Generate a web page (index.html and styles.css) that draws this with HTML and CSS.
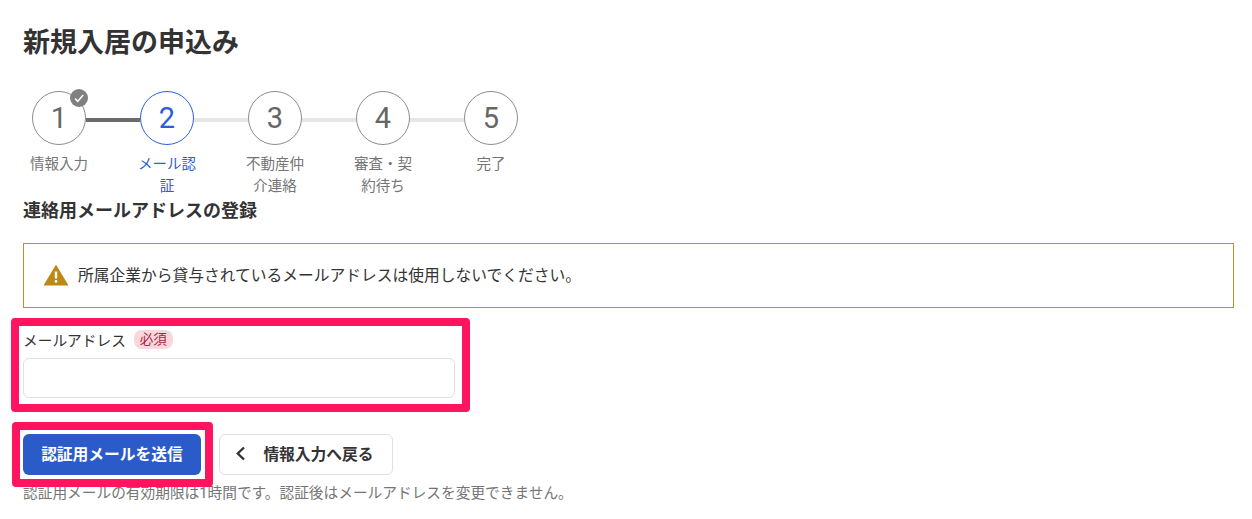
FILE: index.html
```html
<!DOCTYPE html>
<html lang="ja">
<head>
<meta charset="utf-8">
<title>新規入居の申込み</title>
<link rel="stylesheet" href="styles.css">
</head>
<body>
<main class="page">
  <h1 class="title">新規入居の申込み</h1>
  <ol class="steps">
    <li class="step done">
      <div class="circle">1
        <span class="check"><svg viewBox="0 0 18 18" width="18" height="18"><path d="M5 9.5l2.8 2.8L13.2 6" fill="none" stroke="#fff" stroke-width="1.5"/></svg></span>
      </div>
      <div class="label">情報入力</div>
    </li>
    <li class="step current">
      <div class="circle">2</div>
      <div class="label">メール認証</div>
    </li>
    <li class="step">
      <div class="circle">3</div>
      <div class="label">不動産仲介連絡</div>
    </li>
    <li class="step">
      <div class="circle">4</div>
      <div class="label">審査・契約待ち</div>
    </li>
    <li class="step last">
      <div class="circle">5</div>
      <div class="label">完了</div>
    </li>
  </ol>
  <h2 class="section">連絡用メールアドレスの登録</h2>
  <div class="alert">
    <svg class="warn" viewBox="0 0 26 22" width="26" height="22"><path d="M13 0.5L25.5 21.5H0.5Z" fill="#bc8a14"/><rect x="11.8" y="7.5" width="2.4" height="7" fill="#fff"/><rect x="11.8" y="16" width="2.4" height="2.6" fill="#fff"/></svg>
    <span>所属企業から貸与されているメールアドレスは使用しないでください。</span>
  </div>
  <div class="field">
    <div class="field-label"><span>メールアドレス</span><span class="req">必須</span></div>
    <input class="input" type="text" aria-label="メールアドレス">
    <div class="mark mark-field"></div>
  </div>
  <div class="actions">
    <button class="btn primary" type="button">認証用メールを送信</button>
    <button class="btn secondary" type="button">
      <svg class="chev" viewBox="0 0 10 14" width="10" height="14"><path d="M6 1.5L-0.2 7.5L6 13.5" fill="none" stroke="#333" stroke-width="2.4"/></svg>
      <span>情報入力へ戻る</span>
    </button>
    <div class="mark mark-btn"></div>
  </div>
  <p class="note">認証用メールの有効期限は<span class="num">1</span>時間です。認証後はメールアドレスを変更できません。</p>
</main>
</body>
</html>
```

FILE: styles.css
```css
* { box-sizing: border-box; }
html, body { margin: 0; background: #fff; }
body {
  font-family: "Liberation Sans", "Noto Sans CJK JP", sans-serif;
  color: #333;
  height: 519px;
  overflow: hidden;
}
.page { padding: 25px 18px 0 23px; }
.title {
  margin: 0;
  font-size: 27px;
  line-height: 36px;
  font-weight: 700;
  color: #333;
}
.steps {
  list-style: none;
  display: flex;
  margin: 30px 0 0 -18px;
  padding: 0;
}
.step {
  position: relative;
  width: 108px;
  display: flex;
  flex-direction: column;
  align-items: center;
}
.step::after {
  content: "";
  position: absolute;
  left: 81px;
  width: 54px;
  top: 27px;
  height: 4px;
  background: #e6e6e6;
}
.step.done::after { background: #6b6b6b; }
.step.last::after { display: none; }
.circle {
  position: relative;
  z-index: 1;
  width: 54px;
  height: 54px;
  border-radius: 50%;
  border: 1px solid #8c8c8c;
  background: #fff;
  display: flex;
  align-items: center;
  justify-content: center;
  font-family: Roboto, "Liberation Sans", sans-serif;
  font-size: 29px;
  color: #666;
}
.check {
  position: absolute;
  top: -3px;
  right: -3px;
  width: 18px;
  height: 18px;
  border-radius: 50%;
  background: #808080;
  display: flex;
}
.label {
  width: 66px;
  margin-top: 7.5px;
  font-size: 14.5px;
  line-height: 22px;
  color: #757575;
  text-align: center;
}
.current .circle { border-color: #2b5fd9; color: #2b5fd9; }
.current .label { color: #2b5fd9; }
.section {
  margin: 2.5px 0 0;
  font-size: 18px;
  line-height: 24px;
  font-weight: 700;
  color: #333;
}
.alert {
  margin-top: 20px;
  height: 65px;
  border: 1px solid #b8922a;
  display: flex;
  align-items: center;
  gap: 9px;
  padding: 0 0 2px 19px;
  font-size: 15.75px;
  color: #333;
}
.warn { flex: none; }
.field {
  position: relative;
  margin-top: 21px;
  width: 432px;
}
.field-label {
  display: flex;
  align-items: center;
  gap: 8px;
  height: 22px;
  padding-bottom: 2px;
  font-size: 14.7px;
}
.req {
  background: #f9d7dd;
  color: #b3213f;
  border-radius: 8px;
  font-size: 13.5px;
  line-height: 19px;
  padding: 0 6px;
}
.input {
  display: block;
  width: 432px;
  height: 40px;
  margin-top: 7px;
  border: 1px solid #e0e0e0;
  border-radius: 6px;
  background: #fff;
}
.mark {
  position: absolute;
  border: 8px solid #ff1460;
  border-radius: 4px;
  pointer-events: none;
}
.mark-field { left: -12px; right: -15px; top: -11px; bottom: -14px; }
.actions {
  position: relative;
  display: flex;
  gap: 18px;
  margin-top: 36px;
}
.btn {
  height: 41px;
  border-radius: 6px;
  padding: 0 0 3px;
  font-family: inherit;
  font-size: 15.75px;
  font-weight: 700;
  display: flex;
  align-items: center;
  justify-content: center;
}
.primary {
  width: 178px;
  background: #2b5bc9;
  border: 0;
  color: #fff;
}
.secondary {
  width: 174px;
  background: #fff;
  border: 1px solid #e0e0e0;
  color: #333;
  gap: 15px;
}
.chev { overflow: visible; }
.mark-btn { left: -11px; top: -12px; width: 201px; height: 65px; }
.note {
  margin: 8px 0 0;
  font-size: 14.7px;
  line-height: 20px;
  color: #757575;
}
.num { font-family: Roboto, sans-serif; }
```
